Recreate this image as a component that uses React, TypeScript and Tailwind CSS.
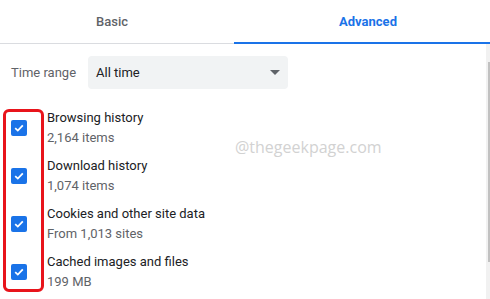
import React from "react";

const ROWS = [
  { title: "Browsing history", sub: "2,164 items" },
  { title: "Download history", sub: "1,074 items" },
  { title: "Cookies and other site data", sub: "From 1,013 sites" },
  { title: "Cached images and files", sub: "199 MB" },
];

function Check() {
  return (
    <div className="w-4 h-4 rounded-[2px] bg-[#1a73e8] flex items-center justify-center">
      <svg width="12" height="12" viewBox="0 0 12 12" fill="none">
        <path d="M2.2 6.2 L4.8 8.6 L9.8 3.4" stroke="white" strokeWidth="1.8" />
      </svg>
    </div>
  );
}

export default function App() {
  return (
    <div
      className="relative w-[490px] h-[299px] bg-white overflow-hidden text-[13px]"
      style={{ fontFamily: "Roboto, Arial, sans-serif" }}
    >
      {/* tabs */}
      <div className="flex h-[44px] border-b border-[#dadce0]">
        <div className="w-[234px] flex items-center justify-center pr-[10px] font-medium text-[#5f6368]">
          Basic
        </div>
        <div className="flex-1 relative flex items-center justify-center pl-[12px] font-bold text-[#1a73e8]">
          Advanced
          <div className="absolute left-0 right-0 bottom-[-1px] h-[2px] bg-[#1a73e8]" />
        </div>
      </div>

      <div className="flex">
        <div className="flex-1">
          {/* time range */}
          <div className="flex items-center mt-[12px] pl-[11px]">
            <span className="w-[77px] text-[#5f6368]">Time range</span>
            <div className="w-[200px] h-[33px] rounded-[4px] bg-[#f1f3f4] flex items-center justify-between pl-[8px] pr-[8px] text-[#202124]">
              <span>All time</span>
              <svg width="10" height="6" viewBox="0 0 10 6">
                <path d="M0 0 L10 0 L5 5 Z" fill="#5f6368" />
              </svg>
            </div>
          </div>

          {/* checkbox list */}
          <div className="relative mt-[15px]">
            <div className="absolute left-[3px] top-[5px] w-[41px] h-[183px] rounded-[6px] border-[3px] border-[#e8141b]" />
            {ROWS.map((r) => (
              <div key={r.title} className="flex items-center h-[48px]">
                <div className="w-[47px] pl-[11px]">
                  <Check />
                </div>
                <div className="leading-[20px]">
                  <div className="text-[#202124]">{r.title}</div>
                  <div className="text-[#5f6368]">{r.sub}</div>
                </div>
              </div>
            ))}
            <div
              className="absolute left-[235px] top-[31px] text-[16px] text-[#d2d2d2]"
              style={{ fontFamily: "'Open Sans', sans-serif" }}
            >
              @thegeekpage.com
            </div>
          </div>
        </div>

        {/* scrollbar */}
        <div className="w-[4px] h-[255px] bg-[#f1f1f1] flex justify-end pt-[18px]">
          <div className="w-[2px] h-[200px] bg-[#c1c1c1]" />
        </div>
      </div>
    </div>
  );
}
